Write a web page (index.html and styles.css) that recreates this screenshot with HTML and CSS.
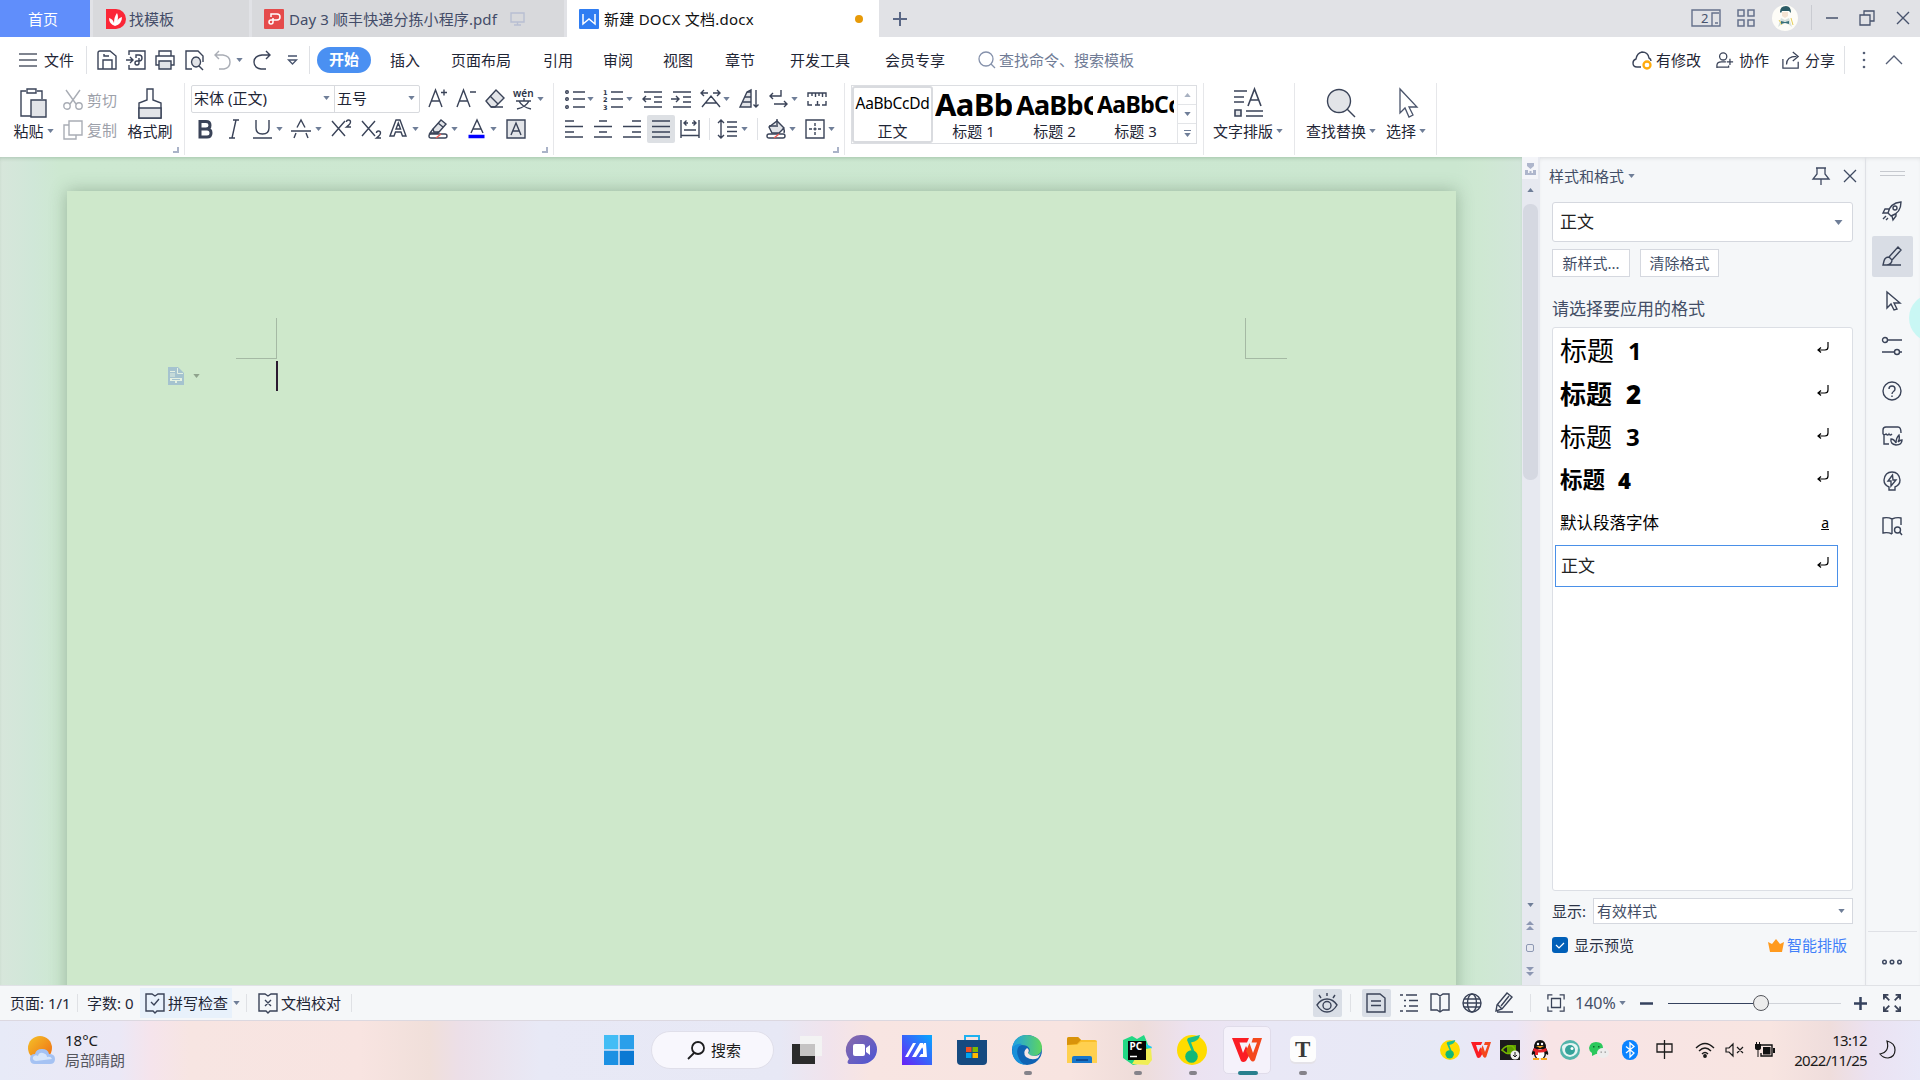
FILE: index.html
```html
<!DOCTYPE html>
<html lang="zh-CN">
<head>
<meta charset="utf-8">
<title>新建 DOCX 文档.docx</title>
<link rel="stylesheet" href="styles.css">
</head>
<body>
<svg class="defs" width="0" height="0">
  <symbol id="caret" viewBox="0 0 8 5"><path d="M0 0h8L4 5z" fill="#6f7e98"/></symbol>
  <symbol id="ret" viewBox="0 0 12 12"><path d="M11 0v5q0 3-3 3H1M4 5.500L1 8l3 2.500" fill="none" stroke="#000" stroke-width="1.200"/></symbol>
  <symbol id="note" viewBox="0 0 30 30"><circle cx="15" cy="15" r="15" fill="#ffdc00"/><path d="M11 3l12-3q-1 6-9 7.500L18.500 19l-3-1L10 5z" fill="#1bbf8d"/><circle cx="14.500" cy="21.500" r="6.300" fill="#12b877"/></symbol>
  <symbol id="wps" viewBox="0 0 30 24"><path d="M0 0h17l-2 4.500H7.500L11 15l3-7 4 8-4 7q-3 2-5 0z" fill="#fb1d24"/><path d="M21 0h9l-7 22q-2 3-4.500 0L14 13l3.500-8 3.500 10 4-10.500h-5.500z" fill="#f4481d"/></symbol>
</svg>

<header class="titlebar">
  <div class="tab home">首页</div>
  <div class="tab tpl">
    <svg class="tabico" viewBox="0 0 20 20"><path d="M0 0h10a10 10 0 0 1 0 20H0z" fill="#fb2637"/><path d="M9 17q-6-2-6-8 4 1 5 5 0-6 3-10 2 4 0 9 1-4 5-5 0 7-7 9z" fill="#fff"/></svg>
    <span>找模板</span>
  </div>
  <div class="tab pdf">
    <svg class="tabico" viewBox="0 0 20 20"><rect width="20" height="20" rx="1" fill="#e54b4b"/><path d="M7 8V5h6q3 0 3 3t-3 3H7q-2 0-2 2t2 2 2-2V9" fill="none" stroke="#fff" stroke-width="1.500"/></svg>
    <span class="name">Day 3 顺丰快递分拣小程序.pdf</span>
    <svg width="15" height="14" viewBox="0 0 15 14" fill="none" stroke="#b8bfd2" stroke-width="1.400"><path d="M1 1h13v9H1zM7.500 10v3M4 13h7"/></svg>
  </div>
  <div class="tab doc">
    <svg class="tabico" viewBox="0 0 20 20"><rect width="20" height="20" rx="1" fill="#2f7df2"/><path d="M4 5v10l6-5 6 5V5" fill="none" stroke="#fff" stroke-width="1.500"/></svg>
    <span>新建 DOCX 文档.docx</span>
    <i class="dirty"></i>
  </div>
  <svg class="addtab" viewBox="0 0 14 14"><path d="M7 0v14M0 7h14" stroke="#5a6785" stroke-width="2"/></svg>
  <div class="wintools">
    <svg width="30" height="18" viewBox="0 0 30 18" fill="none" stroke="#65718c" stroke-width="1.400"><path d="M1 1h28v16H1zM28 4h-7v13M24 14h3"/><text x="10" y="14" class="two">2</text></svg>
    <svg width="18" height="18" viewBox="0 0 18 18" fill="none" stroke="#65718c" stroke-width="1.500"><path d="M1 1h6v6H1zM11 1h6v6h-6zM1 11h6v6H1zM11 11h6v6h-6z"/></svg>
    <svg width="26" height="26" viewBox="0 0 26 26"><circle cx="13" cy="13" r="13" fill="#fdfcf7"/><path d="M8 7q0-6 6-6 5 0 5 7l-2-2H10l-1 2z" fill="#2b5b66"/><path d="M10 7h6v4l-3 2-3-2z" fill="#f4e3d2"/><path d="M6 22l3-9 4 2 4-2 3 9-4-3-3-3-3 3z" fill="#d6e0dc"/><path d="M7 15l3 5M19 13l2 7" stroke="#e6cf56"/><path d="M9 16l4 1 4-1v3l-4-1-4 1z" fill="#38717b"/></svg>
    <i class="vline"></i>
    <svg width="12" height="12" viewBox="0 0 12 12"><path d="M0 6h12" stroke="#47536d" stroke-width="1.500"/></svg>
    <svg width="16" height="16" viewBox="0 0 16 16" fill="none" stroke="#47536d" stroke-width="1.300"><path d="M1 5h10v10H1zM5 5V1h10v10h-4"/></svg>
    <svg width="14" height="14" viewBox="0 0 14 14"><path d="M1 1l12 12M13 1L1 13" stroke="#47536d" stroke-width="1.400"/></svg>
  </div>
</header>

<nav class="menubar">
  <svg width="18" height="14" viewBox="0 0 18 14"><path d="M0 1h18M0 7h18M0 13h18" stroke="#555c6b" stroke-width="1.300"/></svg>
  <span>文件</span>
  <i class="vline"></i>
  <svg class="ic" viewBox="0 0 20 20"><path d="M1 3q0-2 2-2h10l6 5v13H1zM6 19v-9h9v9M7 4v2h5"/></svg>
  <svg class="ic" viewBox="0 0 20 20"><path d="M3 5V1h16v18H3v-4M0 10h7M4 7l3 3-3 3M10 8V5h3q3 0 3 3t-3 3h-2q-2 0-2 2t2 2 2-2V8"/></svg>
  <svg class="ic" viewBox="0 0 20 20"><path d="M4 6V1h12v5M4 15H1V6h18v9h-3"/><path class="soft" d="M4 11h12v8H4z"/></svg>
  <svg class="ic" viewBox="0 0 20 20"><path d="M7 19H1V1h12l5 5v6"/><path class="soft" d="M11 7a4.500 5 0 1 0 .1 0z"/><path d="M14 16l4 4"/></svg>
  <svg class="ic dim" viewBox="0 0 20 20"><path d="M5 1L1 5l4 4M1 5h8q7 1 7 7t-6 7H5"/></svg>
  <svg class="caret"><use href="#caret"/></svg>
  <svg class="ic" viewBox="0 0 20 20"><path d="M13 1l4 4-4 4M17 5H9q-8 1-8 7t7 7h5"/></svg>
  <svg width="11" height="11" viewBox="0 0 11 11" fill="none" stroke="#47536d" stroke-width="1.300"><path d="M1 1h9M1.500 5h8L5.500 9z"/></svg>
  <i class="vline"></i>
  <b class="pill">开始</b>
  <span>插入</span><span>页面布局</span><span>引用</span><span>审阅</span><span>视图</span><span>章节</span><span>开发工具</span><span>会员专享</span>
  <svg width="18" height="18" viewBox="0 0 18 18" fill="none" stroke="#8591ab" stroke-width="1.300"><circle cx="8" cy="8" r="7"/><path d="M13 13l4 4"/></svg>
  <span class="hint">查找命令、搜索模板</span>
  <svg class="ic" viewBox="0 0 20 20"><path d="M9 17H5Q1 17 1 13q0-3 3-4 1-6 6-7 6 0 7 6 2 1 2 3"/><circle cx="15" cy="15" r="3.500" stroke="#ffab0c" stroke-width="2.300"/></svg>
  <span>有修改</span>
  <svg class="ic s18" viewBox="0 0 20 20"><circle cx="8" cy="6" r="4"/><path d="M1 19v-3q0-4 5-4h5M1 18h13v-2M12 12h7M15.500 8.500v7"/></svg>
  <span>协作</span>
  <svg class="ic s18" viewBox="0 0 20 20"><path d="M1 9v10h17v-7M5 15q0-9 11-9M12 1l6 5-6 5"/></svg>
  <span>分享</span>
  <i class="vline"></i>
  <svg width="8" height="18" viewBox="0 0 8 18" fill="#555f76"><circle cx="4" cy="2" r="1.300"/><circle cx="4" cy="9" r="1.300"/><circle cx="4" cy="16" r="1.300"/></svg>
  <svg width="18" height="10" viewBox="0 0 18 10" fill="none" stroke="#555f76" stroke-width="1.300"><path d="M1 9l8-8 8 8"/></svg>
</nav>

<section class="ribbon">
  <div class="group g-clip">
    <div class="big paste">
      <svg width="28" height="30" viewBox="0 0 28 30" fill="none" stroke="#3a4358" stroke-width="1.400"><path d="M6 3H1v25h10M17 3h5v8M7 1h9v4H7z"/><path class="soft" d="M11 12h15v17H11z"/></svg>
      <span>粘贴<svg class="caret"><use href="#caret"/></svg></span>
    </div>
    <div class="pairs">
      <div><svg class="ic dim" viewBox="0 0 20 20"><path d="M3 0l10 14M17 0L7 14"/><circle cx="4" cy="16" r="3.200"/><circle cx="16" cy="16" r="3.200"/></svg>剪切</div>
      <div><svg class="ic dim" viewBox="0 0 20 20"><path d="M6 1h13v14H6zM6 5H1v14h12v-4"/></svg>复制</div>
    </div>
    <div class="big brush">
      <svg width="24" height="31" viewBox="0 0 24 31" fill="none" stroke="#3a4358" stroke-width="1.400"><path d="M9 1h6v11l8 3v15H1V15l8-3z"/><path class="soft" d="M1 20h22v10H1z"/></svg>
      <span>格式刷</span>
    </div>
    <i class="corner"></i>
  </div>

  <div class="group g-font">
    <div class="row f1">
      <div class="combo"><span class="face">宋体 (正文)<svg class="caret"><use href="#caret"/></svg></span><span class="size">五号<svg class="caret"><use href="#caret"/></svg></span></div>
      <svg class="ic" viewBox="0 0 20 20"><path d="M1 18L7.500 1 14 18M3 12h9M13 3.500h6M16 .5v6"/></svg>
      <svg class="ic" viewBox="0 0 20 20"><path d="M1 18L7.500 1 14 18M3 12h9M14 3h6"/></svg>
      <svg class="ic" viewBox="0 0 20 20"><path class="soft" d="M1 12L11 1l8 8-9 9H6z"/><path d="M5 7l8 8M6 18h12"/></svg>
      <svg class="ic" viewBox="0 0 20 20"><text class="wen" x="-1" y="8">wén</text><path d="M2 12h15M10 9v3M5 12q3 6 12 8M15 12q-3 6-12 8"/></svg>
      <svg class="caret"><use href="#caret"/></svg>
    </div>
    <div class="row f2">
      <svg class="ic" viewBox="0 0 20 20"><path stroke-width="3" d="M5 2.500h6q4 0 4 3.700t-4 3.800H5zM5 10h7q4 0 4 4t-4 4H5z"/></svg>
      <svg class="ic" viewBox="0 0 20 20"><path d="M9 1h6M5 19h6M12 1L8 19"/></svg>
      <svg class="ic" viewBox="0 0 20 20"><path d="M3 1v8q0 6 6.500 6T16 9V1M0 19h19"/></svg>
      <svg class="caret"><use href="#caret"/></svg>
      <svg class="ic" viewBox="0 0 20 20"><path d="M3 19l2-5M17 19l-2-5M6 8.500L10 1l4 7.500M0 12h20"/></svg>
      <svg class="caret"><use href="#caret"/></svg>
      <svg class="ic" viewBox="0 0 20 20"><path d="M1 2l13 15M14 2L1 17M15.500 3q0-2 2-2t2 2q0 2-4 5h4.500"/></svg>
      <svg class="ic" viewBox="0 0 20 20"><path d="M1 2l13 15M14 2L1 17M15.500 14q0-2 2-2t2 2q0 2-4 5h4.500"/></svg>
      <svg class="ic" viewBox="0 0 20 20"><path d="M1 17L7 1h4l6 16h-3.500l-1.500-4H6.500L5 17zM7 10h4.500L9.300 4z"/></svg>
      <svg class="caret"><use href="#caret"/></svg>
      <svg class="ic" viewBox="0 0 20 20"><path class="soft" d="M5 10l8-9 5 4-7 8H6z"/><path d="M5 10l-3 4h7l2-1M10 4l5 4M3 15h14q2 0 2 2t-2 2H3q-2 0-2-2t2-2z"/><path d="M8 19l5-4" stroke="#ee5b52"/></svg>
      <svg class="caret"><use href="#caret"/></svg>
      <svg class="ic" viewBox="0 0 20 20"><path d="M4 14L10 1l6 13M6 10h8"/><path d="M1.500 17.500h16" stroke="#0000ff" stroke-width="3.500"/></svg>
      <svg class="caret"><use href="#caret"/></svg>
      <svg class="ic" viewBox="0 0 20 20"><path class="soft" d="M1 1h18v18H1z"/><path d="M5 16l5-12 5 12M7 12h6"/></svg>
    </div>
    <i class="corner"></i>
  </div>

  <div class="group g-para">
    <div class="row p1">
      <svg class="ic" viewBox="0 0 20 20"><path d="M8 3h12M8 10h12M8 18h12"/><circle cx="2" cy="3" r="1.300"/><circle cx="2" cy="10" r="1.300"/><circle cx="2" cy="18" r="1.300"/></svg>
      <svg class="caret"><use href="#caret"/></svg>
      <svg class="ic" viewBox="0 0 20 20"><path d="M8 3h12M8 10h12M8 18h12"/><text class="num" x="0" y="5.500">1</text><text class="num" x="0" y="13">2</text><text class="num" x="0" y="20.500">3</text></svg>
      <svg class="caret"><use href="#caret"/></svg>
      <svg class="ic" viewBox="0 0 20 20"><path d="M2 3h18M12 8h8M12 13h8M2 18h18M1 10h8M4 7l-3 3 3 3"/></svg>
      <svg class="ic" viewBox="0 0 20 20"><path d="M2 3h18M12 8h8M12 13h8M2 18h18M0 10h8M5 7l3 3-3 3"/></svg>
      <svg class="ic" viewBox="0 0 20 20"><path d="M2 18l9-11 9 11M6 14h10M1 4h7M4 1L1 4l3 3M13 4h7M17 1l3 3-3 3"/></svg>
      <svg class="caret"><use href="#caret"/></svg>
      <svg class="ic" viewBox="0 0 20 20"><path class="soft" d="M1 18L8 3l4-2v17z"/><path d="M8 3h4M6 8h6M4 13h8M17 1v17M14.500 15.500L17 18l2.500-2.500"/></svg>
      <svg class="ic" viewBox="0 0 20 20"><path d="M12 1v6H1M4 4L1 7l3 3M5 15h13M15 12l3 3-3 3"/></svg>
      <svg class="caret"><use href="#caret"/></svg>
      <svg class="ic" viewBox="0 0 20 20"><path d="M1 8V4h18v4M5 4v3M8.500 4v4M12 4v3M15.500 4v4M1 12v4h4M8 16h5M10.500 12v4M15 16h4v-4"/></svg>
    </div>
    <div class="row p2">
      <svg class="ic" viewBox="0 0 20 20"><path d="M1 2h9M1 7.500h18M1 13h9M1 18h18"/></svg>
      <svg class="ic" viewBox="0 0 20 20"><path d="M6 2h8M1 7.500h18M6 13h8M1 18h18"/></svg>
      <svg class="ic" viewBox="0 0 20 20"><path d="M10 2h9M1 7.500h18M10 13h9M1 18h18"/></svg>
      <span class="on"><svg class="ic" viewBox="0 0 20 20"><path d="M1 2h18M1 7.500h18M1 13h18M1 18h18"/></svg></span>
      <svg class="ic" viewBox="0 0 20 20"><path d="M1 1v18M19 1v18M4 4h4M12 4h4M6.500 1.500L4 4l2.500 2.500M13.500 1.500L16 4l-2.500 2.500M4 11h12M1 16.500h18"/></svg>
      <i class="vline"></i>
      <svg class="ic" viewBox="0 0 20 20"><path d="M4 1v18M1 4l3-3 3 3M1 16l3 3 3-3M10 3h10M10 8h10M10 12.500h10M10 17h10"/></svg>
      <svg class="caret"><use href="#caret"/></svg>
      <i class="vline"></i>
      <svg class="ic" viewBox="0 0 20 20"><path class="soft" d="M3 8l8-6 7 7-5 5H6z"/><path d="M11 6V0M3 7h9M17 9q2 2 1 5M3 15h14q2 0 2 2t-2 2H3q-2 0-2-2t2-2z"/><path d="M8 19l5-4" stroke="#ee5b52"/></svg>
      <svg class="caret"><use href="#caret"/></svg>
      <svg class="ic" viewBox="0 0 20 20"><path d="M1 1h18v18H1z"/><path d="M10 4v3M10 8.500v3M10 13v3M4 10h3M8.500 10h3M13 10h3"/></svg>
      <svg class="caret"><use href="#caret"/></svg>
    </div>
    <i class="corner"></i>
  </div>

  <div class="group g-style">
    <div class="gallery">
      <div class="cell sel"><p class="s0">AaBbCcDd</p><em>正文</em></div>
      <div class="cell"><p class="s1">AaBb</p><em>标题 1</em></div>
      <div class="cell"><p class="s2">AaBbC</p><em>标题 2</em></div>
      <div class="cell"><p class="s3">AaBbCc</p><em>标题 3</em></div>
      <div class="spin"><span><svg class="caret up faint"><use href="#caret"/></svg></span><span><svg class="caret"><use href="#caret"/></svg></span><span><i></i><svg class="caret"><use href="#caret"/></svg></span></div>
    </div>
  </div>

  <div class="group g-lay">
    <div class="big">
      <svg width="30" height="30" viewBox="0 0 30 30" fill="none" stroke="#3a4358" stroke-width="1.600"><path d="M1 3h13M1 9h10M1 14h10M15 18L21.500 1 28 18M17 12h9M13 23h17M13 28h17"/><path class="soft" d="M2 22h6v6H2z"/></svg>
      <span>文字排版<svg class="caret"><use href="#caret"/></svg></span>
    </div>
  </div>

  <div class="group g-find">
    <div class="big find">
      <svg width="30" height="30" viewBox="0 0 30 30" fill="none" stroke="#3a4358" stroke-width="1.400"><circle class="soft" cx="13" cy="13" r="11.500"/><path d="M21 21l8 8"/></svg>
      <span>查找替换<svg class="caret"><use href="#caret"/></svg></span>
    </div>
    <div class="big">
      <svg width="30" height="30" viewBox="0 0 30 30" fill="none" stroke="#4a546b" stroke-width="1.300"><path d="M9 1v24l5-5 4 9 4-2-4-8h8z"/></svg>
      <span>选择<svg class="caret"><use href="#caret"/></svg></span>
    </div>
  </div>
</section>

<main class="work">
  <div class="canvas">
    <div class="page"></div>
    <i class="mark ml"></i><i class="mark mr"></i>
    <i class="cursor"></i>
    <div class="pasteopt">
      <svg width="16" height="18" viewBox="0 0 16 18"><path d="M0 0h10l6 6v12H0z" fill="#a5c3cf"/><path d="M9.500 1v5.500H15M2 4.500h5M2 7h5M2 9h5" stroke="#e4f1e2" fill="none"/><path d="M2 11h12v3H9v2H7v-2H2z" fill="#e4f1e2"/><path d="M4 12.500h8" stroke="#a5c3cf"/></svg>
      <svg width="7" height="4" viewBox="0 0 8 5"><path d="M0 0h8L4 5z" fill="#8fa38d"/></svg>
    </div>
  </div>
  <div class="scroll">
    <div class="top"><svg width="11" height="13" viewBox="0 0 11 13" fill="#aeb6cc"><path d="M2 0h7v3L5.500 6 2 3zM0 7h3v3h1.500V8h2v2H8V7h3v5H0z"/></svg></div>
    <svg class="caret up a1"><use href="#caret"/></svg>
    <i class="thumb"></i>
    <svg class="caret a2"><use href="#caret"/></svg>
    <svg class="a3" width="8" height="9" viewBox="0 0 8 9" fill="#8d98b3"><path d="M0 4l4-4 4 4zM0 9l4-4 4 4z"/></svg>
    <i class="sq"></i>
    <svg width="8" height="9" viewBox="0 0 8 9" fill="#8d98b3"><path d="M0 0h8L4 4zM0 5h8L4 9z"/></svg>
  </div>
  <aside class="panel">
    <div class="phead"><span>样式和格式</span><svg class="caret"><use href="#caret"/></svg>
      <svg class="pin" width="18" height="18" viewBox="0 0 18 18" fill="none" stroke="#3f4a62" stroke-width="1.300"><path d="M4 1h10M5 1v6l-4 5h16l-4-5V1M9 12v6"/></svg>
      <svg width="14" height="14" viewBox="0 0 14 14"><path d="M1 1l12 12M13 1L1 13" stroke="#3f4a62" stroke-width="1.300"/></svg></div>
    <div class="cur"><span>正文</span><svg class="caret wide"><use href="#caret"/></svg></div>
    <div class="btns"><span>新样式...</span><span>清除格式</span></div>
    <div class="lbl">请选择要应用的格式</div>
    <div class="list">
      <div class="it h1"><span>标题</span><b>1</b><svg class="ret"><use href="#ret"/></svg></div>
      <div class="it h2"><span>标题</span><b>2</b><svg class="ret"><use href="#ret"/></svg></div>
      <div class="it h3"><span>标题</span><b>3</b><svg class="ret"><use href="#ret"/></svg></div>
      <div class="it h4"><span>标题</span><b>4</b><svg class="ret"><use href="#ret"/></svg></div>
      <div class="it h5"><span>默认段落字体</span><u>a</u></div>
      <div class="it h6"><span>正文</span><svg class="ret"><use href="#ret"/></svg></div>
    </div>
    <div class="show"><span>显示:</span><div>有效样式<svg class="caret"><use href="#caret"/></svg></div></div>
    <div class="prev">
      <svg width="16" height="16" viewBox="0 0 16 16"><rect width="16" height="16" rx="3" fill="#005fb8"/><path d="M4 8l3 3 5-5" fill="none" stroke="#fff" stroke-width="1.200"/></svg>
      <span>显示预览</span>
      <svg class="crown" width="16" height="13" viewBox="0 0 16 13"><path d="M0 3l4 2 4-5 4 5 4-2-2 10H2z" fill="#ff9a1e"/></svg>
      <a>智能排版</a>
    </div>
  </aside>
  <aside class="side">
    <i class="grip"></i>
    <span class="sb"><svg class="ic" viewBox="0 0 20 20"><path d="M6 12Q8 2 19 1q0 11-10 14zM7 8H3l-2 4 5 0M10 15l1 4 3-4v-3M1 18l3-3M4 19l2-2"/><circle cx="13" cy="7" r="2"/></svg></span>
    <span class="sb on"><svg class="ic" viewBox="0 0 20 20"><path d="M7 11L16 1l3 3-9 10zM7 11q-4 0-5 4l-1 4h4q5-1 5-5M1 19h18"/></svg></span>
    <span class="sb"><svg class="ic" viewBox="0 0 20 20"><path d="M5 1v16l4-4 3 6 3-1-3-6h6z"/></svg></span>
    <span class="sb"><svg class="ic" viewBox="0 0 20 20"><circle cx="3" cy="4" r="2.500"/><path d="M6 4h14M0 16h12M18 16h2"/><circle cx="15" cy="16" r="2.500"/></svg></span>
    <span class="sb"><svg class="ic" viewBox="0 0 20 20"><circle cx="10" cy="10" r="9"/><path d="M7 8q0-3 3-3t3 3q0 1.500-1.500 2.500T10 13M10 14.500v1.500"/></svg></span>
    <span class="sb"><svg class="ic" viewBox="0 0 20 20"><path d="M2 8v10h5M1 8V4q0-3 3-3h12q3 0 3 6M1 7q0 3 3 1 2 2 3 0 1 2 3 0"/><path d="M14 19q-6-1-5-6 3 0 5 4 0-5 3-8 1 4-1 7 2-2 4-2 0 5-6 5z"/></svg></span>
    <span class="sb"><svg class="ic" viewBox="0 0 20 20"><path d="M7 19v-3q-5-2-5-7 1-8 8-8t8 8q0 5-5 7v3zM10.500 4L6 10h3v5l5-6h-3z"/></svg></span>
    <span class="sb"><svg class="ic" viewBox="0 0 20 20"><path d="M10 18q-4-2-9-1V2q5-1 9 1 5-2 9-1v7M10 3v15"/><circle cx="15.500" cy="14" r="3"/><path d="M17.500 16l2.500 3"/></svg></span>
    <i class="sep"></i>
    <svg class="dots" width="20" height="6" viewBox="0 0 20 6" fill="none" stroke="#3f4a62" stroke-width="1.500"><circle cx="2.500" cy="3" r="1.800"/><circle cx="10" cy="3" r="1.800"/><circle cx="17.500" cy="3" r="1.800"/></svg>
    <div class="bubble"></div>
  </aside>
</main>

<footer class="status">
  <span>页面: 1/1</span><i class="vline"></i><span>字数: 0</span>
  <span class="spell"><svg class="ic" viewBox="0 0 20 20"><path d="M1 1h6l3 2 3-2h6v17h-7l-2 2-2-2H1zM6 9l3 3 5-6"/></svg>拼写检查</span>
  <svg class="caret"><use href="#caret"/></svg><i class="vline"></i>
  <span class="proof"><svg class="ic" viewBox="0 0 20 20"><path d="M1 1h6l3 2 3-2h6v17h-7l-2 2-2-2H1zM7 7l6 6M13 7l-6 6"/></svg>文档校对</span><i class="vline"></i>
  <span class="on"><svg class="ic" viewBox="0 0 20 20"><path d="M0 12q4-6 10-6t10 6q-4 7-10 7T0 12zM10 0v3M2 2l2 3M18 2l-2 3"/><circle cx="10" cy="12.500" r="4"/></svg></span>
  <i class="vline"></i>
  <span class="on"><svg class="ic" viewBox="0 0 20 20"><path d="M1 1h13l5 4v14H1zM5 8h10M5 12.500h10"/></svg></span>
  <svg class="ic" viewBox="0 0 20 20"><path d="M0 2h3M6 2h11M4 7.500h2M9 7.500h9M4 13h2M9 13h9M0 18h3M6 18h12"/></svg>
  <svg class="ic" viewBox="0 0 20 20"><path d="M1 1h6l3 2 3-2h6v16h-6l-3 2-3-2H1zM10 3v15"/></svg>
  <svg class="ic" viewBox="0 0 20 20"><circle cx="10" cy="10" r="9"/><ellipse cx="10" cy="10" rx="4.500" ry="9"/><path d="M2 6h16M1 10h18M2 14h16"/></svg>
  <svg class="ic" viewBox="0 0 20 20"><path d="M3 12L13 0l5 4-10 12-6 2zM4 12l4 4M7 13l8-10M3 19h16"/></svg>
  <i class="vline"></i>
  <svg class="ic s18" viewBox="0 0 20 20"><path d="M1 6V1h5M14 1h5v5M19 14v5h-5M6 19H1v-5M5 5h10v10H5z"/></svg>
  <span class="zoom">140%</span>
  <svg class="caret"><use href="#caret"/></svg>
  <svg width="13" height="13" viewBox="0 0 13 13"><path d="M0 6.500h13" stroke="#35425e" stroke-width="2.500"/></svg>
  <div class="slider"><i class="a"></i><i class="knob"></i><i class="b"></i></div>
  <svg width="13" height="13" viewBox="0 0 13 13"><path d="M0 6.500h13M6.500 0v13" stroke="#35425e" stroke-width="2.500"/></svg>
  <svg class="ic s18 heavy" viewBox="0 0 20 20"><path d="M7 7L1 1M1 6V1h5M13 7l6-6M14 1h5v5M7 13l-6 6M1 14v5h5M13 13l6 6M19 14v5h-5"/></svg>
</footer>

<div class="taskbar">
  <svg class="wx" width="30" height="30" viewBox="0 0 30 30"><defs><linearGradient id="sun" x2="1" y2="1"><stop offset="0" stop-color="#f5c228"/><stop offset="1" stop-color="#ee6a13"/></linearGradient></defs><circle cx="14" cy="13" r="12" fill="url(#sun)"/><path d="M9 29q-5 0-5-5t5-5q1-5 7-5t7 5q6 0 6 5t-5 5z" fill="#a5c2f3"/><path d="M10 26q-4-1-3-4 2-3 5-1 1-4 5-3 4 1 4 4 4-1 5 2z" fill="#d7e6fb"/></svg>
  <div class="weather"><span>18°C</span><span>局部晴朗</span></div>
  <div class="apps">
    <svg class="app" viewBox="0 0 30 30"><path d="M0 0h14.300v14.300H0z" fill="#43bdf5"/><path d="M15.700 0H30v14.300H15.700z" fill="#2a9fea"/><path d="M0 15.700h14.300V30H0z" fill="#1c91e3"/><path d="M15.700 15.700H30V30H15.700z" fill="#0a79d3"/></svg>
    <div class="search"><svg width="18" height="18" viewBox="0 0 18 18" fill="none" stroke="#1d1d1f" stroke-width="1.800"><circle cx="11" cy="7" r="6"/><path d="M7 12l-6 6"/></svg>搜索</div>
    <svg class="app" viewBox="0 0 30 30"><path d="M0 9h23v20H0z" fill="#2b2b2b"/><path d="M8 1h22v20H8z" fill="#f3f3f3"/><path d="M8 9h15v12H8z" fill="#c5c3c3"/></svg>
    <svg class="app" viewBox="0 0 30 30"><defs><linearGradient id="chat" x2="1" y2="1"><stop offset="0" stop-color="#8a6aa8"/><stop offset="1" stop-color="#4b55d6"/></linearGradient></defs><path d="M15 0a15 14.500 0 0 1 0 29H2q-3-1 0-5A15 15 0 0 1 15 0z" fill="url(#chat)"/><rect x="6" y="9" width="12" height="12" rx="2" fill="#fff"/><path d="M19 13l4-3v10l-4-3z" fill="#fff"/></svg>
    <svg class="app" viewBox="0 0 30 30"><defs><linearGradient id="arm" x1="1" y1="0" x2="0" y2="1"><stop offset="0" stop-color="#06a8ff"/><stop offset="1" stop-color="#6a20f5"/></linearGradient></defs><path d="M0 0h30v30H0z" fill="url(#arm)"/><path d="M3 22L11 8h3L6 22zM10 22l8-14h3v3l-7 11zM17 22l2-3h2v-5l-1-2 2-4h2l1 14z" fill="#fff"/></svg>
    <svg class="app" viewBox="0 0 30 30"><path d="M8 6V1h14v5" fill="none" stroke="#1fb1f0" stroke-width="2"/><path d="M0 5h30v21q0 4-4 4H4q-4 0-4-4z" fill="#164a80"/><path d="M9 12h5.500v5H9z" fill="#f25022"/><path d="M15.500 12H21v5h-5.500z" fill="#7fba00"/><path d="M9 18h5.500v5H9z" fill="#00a4ef"/><path d="M15.500 18H21v5h-5.500z" fill="#ffb900"/></svg>
    <svg class="app" viewBox="0 0 30 30"><defs><linearGradient id="edg"><stop offset="0" stop-color="#1f9fe8"/><stop offset="1" stop-color="#5fd65c"/></linearGradient></defs><circle cx="15" cy="15" r="15" fill="#0f63b4"/><path d="M0 14Q2 0 15 0q14 1 15 12 0 8-8 9-5 0-6-3 3-2 1-5-2-3-7-3-7 1-10 4z" fill="url(#edg)"/><path d="M16 18q2 3 6 3 5 0 7-3l-3 5q-6 3-12-1-4-5 1-9 3 2 1 5z" fill="#f6e5e5"/><path d="M1 12q4-4 9-3-7 4-4 12 2 7 8 9Q2 29 0 17z" fill="#198fd9"/></svg>
    <svg class="app" viewBox="0 0 30 30"><path d="M0 4q0-2 2-2h9l3 3h14q2 0 2 2v21H0z" fill="#f9bf2c"/><path d="M0 10V4q0-2 2-2h9l3 3-4 4z" fill="#d9930a"/><path d="M0 10h10l4-3h16v21H0z" fill="#ffd04f"/><path d="M5 28v-5q0-2 2-2h16q2 0 2 2v5z" fill="#1877cb"/><path d="M9 24h12v2H9z" fill="#0e4c94"/></svg>
    <svg class="app" viewBox="0 0 30 30"><path d="M1 5l9-4 5 3 7-4 3 7 3 9-3 11-14 3L1 23z" fill="#22d884"/><path d="M22 8l8 4-2 4z" fill="#1cc8f0"/><path d="M24 14l5-1 1 12-4 5-16-1 3-5z" fill="#f0ee55"/><path d="M6 6h18v19H6z" fill="#050505"/><text class="pc" x="7.500" y="15">PC</text><path d="M8 21.500h7" stroke="#fff" stroke-width="1.500"/></svg>
    <svg class="app"><use href="#note"/></svg>
    <span class="active"><svg width="30" height="24"><use href="#wps"/></svg></span>
    <svg class="app t" viewBox="0 0 30 30"><rect x="2" y="2" width="26" height="27" rx="5" fill="#e4e2e8"/><rect x="2" y="1" width="26" height="26" rx="5" fill="#fdfdfd"/><text class="tee" x="7" y="21.500">T</text></svg>
    <i class="dot d1"></i><i class="dot d2"></i><i class="dot d3"></i><i class="dot d4"></i><i class="dot d5"></i>
  </div>
  <div class="tray">
    <svg width="20" height="20"><use href="#note"/></svg>
    <svg width="20" height="16"><use href="#wps"/></svg>
    <svg width="20" height="20" viewBox="0 0 20 20"><path d="M0 0h20v20H0z" fill="#1c1c1c"/><path d="M7 5h9v9H7z" fill="#5f9e00"/><path d="M2 10q4-5 10-4 2 1 3 4-4 5-9 3z" fill="none" stroke="#76b900" stroke-width="1.500"/><circle cx="15" cy="15" r="4.500" fill="#eee"/><path d="M15 12v4M13 15l2 2 2-2" stroke="#222" fill="none"/></svg>
    <svg width="18" height="20" viewBox="0 0 18 20"><path d="M9 0q6 0 6 8 3 5 2 7l-2-1q0 5-6 5t-6-5l-2 1q-1-2 2-7 0-8 6-8z" fill="#111"/><ellipse cx="9" cy="14" rx="4.500" ry="5" fill="#fff"/><path d="M3 8q6 3 12 0l1 3q-7 3-14 0zM4 11h3v4H4z" fill="#e8242b"/><path d="M5 6h8l-4 2zM2 18h6v2H2zM10 18h6v2h-6z" fill="#f8a81b"/><circle cx="7" cy="4" r="1.200" fill="#fff"/><circle cx="11" cy="4" r="1.200" fill="#fff"/></svg>
    <svg width="20" height="20" viewBox="0 0 20 20"><circle cx="10" cy="10" r="10" fill="#52b5ab"/><path d="M2 7q0-3 8-4 7 0 8 5 0 8-8 9-8-1-8-10z" fill="#e6f5f3"/><circle cx="10" cy="10" r="5" fill="#35a39a"/><circle cx="12" cy="8.500" r="1.500" fill="#fff"/></svg>
    <svg width="20" height="18" viewBox="0 0 20 18"><path d="M7 1q7 0 7 6t-7 6l-4 2v-3Q0 10 0 7q1-6 7-6z" fill="#2bc85c"/><ellipse cx="14" cy="12" rx="6" ry="5" fill="#ededed"/><path d="M4 5h1.500v1.500H4zM9 5h1.500v1.500H9z" fill="#0a6b2b"/><path d="M11.500 10.500h1.500v1.200h-1.500zM15.500 10.500H17v1.200h-1.500z" fill="#999"/></svg>
    <svg width="16" height="20" viewBox="0 0 16 20"><rect width="16" height="20" rx="7.500" fill="#0b83ff"/><path d="M4 6.500l8 6.500-4 4V3l4 3.500L4 13" fill="none" stroke="#fff" stroke-width="1.300"/></svg>
    <svg width="17" height="19" viewBox="0 0 17 19" fill="none" stroke="#1b1b1b" stroke-width="1.300"><path d="M1 4h15v8H1zM8.500 0v19"/></svg>
    <svg width="20" height="16" viewBox="0 0 20 16" fill="none" stroke="#1b1b1b" stroke-width="1.400"><path d="M1 6q9-9 18 0M4 9q6-6 12 0M7 12q3-3 6 0"/><circle cx="10" cy="14" r="1.200" fill="#1b1b1b"/></svg>
    <svg width="19" height="14" viewBox="0 0 19 14" fill="none" stroke="#1b1b1b" stroke-width="1.200"><path d="M1 5h3l4-4v12l-4-4H1zM12 4l6 6M18 4l-6 6"/></svg>
    <svg width="20" height="16" viewBox="0 0 20 16"><path d="M5 3h12v11H6v-3" fill="none" stroke="#111" stroke-width="1.400"/><path d="M8 5h7.500v7.500H8zM18 6h2v5h-2zM0 2h6v4q0 2-3 2T0 6zM1 0h1v3H1zM4 0h1v3H4zM2.500 8h1v7h-1z" fill="#111"/></svg>
    <div class="clock"><span>13:12</span><span>2022/11/25</span></div>
    <svg width="17" height="19" viewBox="0 0 17 19" fill="none" stroke="#1b1b1b" stroke-width="1.200"><path d="M8 1q8 2 8 9 0 7-7 8-5 0-8-4 10-2 7-13z"/></svg>
  </div>
</div>
</body>
</html>
```

FILE: styles.css
```css
* { box-sizing: border-box; }
body {
  margin: 0;
  width: 1920px;
  height: 1080px;
  overflow: hidden;
  display: flex;
  flex-direction: column;
  font: 15px/20px "Noto Sans", "Noto Sans CJK SC", sans-serif;
  color: #1f2636;
  background: #fff;
  white-space: nowrap;
}
svg { display: block; flex: none; overflow: visible; }
.defs { position: absolute; }
.caret { width: 7px; height: 4px; }
.caret.up { transform: rotate(180deg); }
.caret.wide { width: 9px; height: 5px; }
.caret.faint { opacity: .6; }
.vline { width: 1px; height: 100%; background: #dfe1e5; }
.ic { width: 20px; height: 20px; fill: none; stroke: #3a4358; stroke-width: 1.4; }
.ic.s18 { width: 18px; height: 18px; }
.ic.heavy { stroke-width: 2; }
.ic.dim { stroke: #a9adb5; }
.soft { fill: #e2e4e8; }
.ic text { fill: #2c3448; stroke: none; }
.wen { font-size: 10px; font-weight: 600; }
.num { font: 700 6.500px "DejaVu Sans", sans-serif; }

/* title bar */
.titlebar { height: 37px; flex: none; display: flex; gap: 3px; background: #e1e2e6; }
.tab { display: flex; align-items: center; background: #d8d9dc; color: #434c68; padding-top: 1px; }
.tabico { width: 20px; height: 20px; margin-right: 5px; }
.home { width: 90px; justify-content: center; background: #608efb; color: #fff; padding-right: 4px; }
.tpl { width: 156px; padding-left: 13px; }
.tpl .tabico { margin-right: 3px; }
.pdf { width: 312px; padding-left: 12px; }
.pdf .name { width: 221px; letter-spacing: .1px; }
.doc { width: 312px; padding-left: 12px; background: #fff; color: #111; letter-spacing: .25px; }
.dirty { width: 8px; height: 8px; border-radius: 50%; background: #e79a08; margin: 0 16px 0 auto; }
.addtab { width: 14px; height: 14px; align-self: center; margin-left: 11px; }
.wintools { margin-left: auto; display: grid; grid-template-columns: 46px 35px 39px 15px 33px 37px 24px; align-items: center; padding-bottom: 2px; }
.wintools .vline { height: 25px; background: #c9cbd1; }
.two { font-size: 13px; fill: #47536d; stroke: none; }

/* menu */
.menubar {
  height: 46px; flex: none; padding-left: 19px;
  display: grid; align-items: center;
  grid-template-columns: 25px 42px 11px 29px 29px 30px 29px 22px 17px 34px 22px 8px 73px 61px 92px 60px 60px 62px 65px 95px 93px 21px 633px 24px 60px 23px 43px 23px 39px 16px 25px 20px;
}
.menubar .vline { height: 28px; }
.pill { width: 54px; height: 26px; line-height: 25px; text-align: center; border-radius: 13px; background: #4a90f2; color: #fff; }
.hint { color: #6f7b95; }

/* ribbon */
.ribbon { height: 74px; flex: none; display: flex; }
.group { position: relative; height: 72px; border-right: 1px solid #e6e7ea; }
.corner { position: absolute; right: 5px; bottom: 2px; width: 6px; height: 6px; border: solid #aab3c8; border-width: 0 2px 2px 0; }
.big { display: flex; flex-direction: column; align-items: center; padding-top: 5px; }
.big > svg { margin-bottom: 3px; }
.big span { display: flex; align-items: center; gap: 3px; }
.g-clip { width: 185px; display: flex; }
.paste { width: 68px; padding: 5px 1px 0 0; }
.pairs { width: 57px; margin-left: -5px; }
.pairs div { display: flex; align-items: center; gap: 4px; height: 31px; color: #9da1aa; }
.pairs div:first-child { padding-top: 3px; }
.brush { width: 60px; }
.brush > svg { margin-bottom: 2px; }
.g-font { width: 369px; padding: 2px 0 0 6px; }
.row { display: grid; align-items: center; height: 28px; }
.row + .row { margin-top: 2px; }
.f1 { grid-template-columns: 237px 28px 29px 29px 23px 8px; }
.f2 { padding-left: 4px; grid-template-columns: 29px 29px 23px 15px 24px 16px 30px 28px 23px 16px 23px 16px 23px 16px 20px; }
.combo { width: 229px; height: 28px; display: flex; border: 1px solid #d8dade; border-radius: 2px; }
.combo span { display: flex; align-items: center; justify-content: space-between; padding: 0 4px 2px 2px; }
.face { width: 143px; border-right: 1px solid #d8dade; }
.size { flex: 1; }
.g-para { width: 291px; padding: 2px 0 0 10px; }
.p1 { padding-left: 1px; grid-template-columns: 22px 16px 23px 16px 29px 29px 23px 16px 30px 22px 16px 20px; }
.p2 { grid-template-columns: 29px 29px 25px 33px 29px 8px 24px 16px 9px 23px 16px 23px 8px; }
.row .vline { height: 22px; }
.row .on { width: 28px; height: 28px; padding: 4px; background: #dde0e4; border-radius: 2px; }
.g-style { width: 359px; padding: 2px 0 0 6px; }
.gallery { width: 346px; height: 59px; border: 1px solid #dcdee2; display: flex; }
.cell { width: 81px; padding: 0 1px; text-align: center; border: 2px solid transparent; border-width: 2px 1px; overflow: hidden; }
.cell.sel { border-width: 2px; border-color: #d9dbdf; border-radius: 3px; padding: 0; }
.cell p { margin: 0; height: 33px; line-height: 33px; overflow: hidden; color: #000; text-align: left; font-weight: 700; }
.cell em { display: block; font-style: normal; line-height: 20px; }
.cell .s0 { font-size: 15.500px; font-weight: 400; letter-spacing: -.3px; text-align: center; line-height: 31px; }
.cell .s1 { font-size: 31px; letter-spacing: -.6px; }
.cell .s2 { font-size: 27px; letter-spacing: -.8px; }
.cell .s3 { font-size: 23px; letter-spacing: -.6px; }
.spin { width: 19px; border-left: 1px solid #e3e5e8; margin-left: auto; }
.spin span { height: 19px; display: flex; flex-direction: column; align-items: center; justify-content: center; gap: 2px; border-bottom: 1px solid #e3e5e8; }
.spin span:last-child { border: 0; }
.spin i { width: 7px; height: 1px; background: #6f7e98; }
.g-lay { width: 91px; padding-right: 2px; }
.g-find { width: 142px; display: flex; padding-left: 11px; }
.find { width: 70px; margin-right: 10px; }

/* work area */
.work { height: 828px; flex: none; display: flex; }
.canvas { position: relative; width: 1522px; overflow: hidden; box-shadow: inset 0 3px 4px -2px rgba(0,60,20,.2); background: linear-gradient(90deg, #d7e6db 0, #d0e7d8 32px, #cde8d1 60px, #cbe7d0 1456px, #cee8d2 1480px, #d2e6da 1522px); }
.page { margin: 34px 0 0 67px; width: 1389px; height: 830px; background: #cee8cb; box-shadow: 0 0 16px rgba(60,90,60,.36); }
.mark { position: absolute; top: 161px; width: 41px; height: 41px; border: solid #a5b9a4; }
.ml { left: 236px; border-width: 0 1px 1px 0; }
.mr { left: 1245px; width: 42px; border-width: 0 0 1px 1px; }
.cursor { position: absolute; left: 276px; top: 204px; width: 2px; height: 30px; background: #2a1a30; }
.pasteopt { position: absolute; left: 168px; top: 210px; display: flex; align-items: center; gap: 9px; }
.scroll { width: 18px; background: #e7e9f0; display: flex; flex-direction: column; align-items: center; padding-right: 2px; }
.scroll .top { width: 16px; height: 22px; padding: 6px 0 0 3px; background: #f4f5f9; }
.a1 { margin-top: 9px; }
.thumb { width: 15px; height: 276px; border-radius: 7px; background: #d5d8e1; margin-top: 12px; }
.a2 { margin-top: 423px; }
.a3 { margin-top: 14px; }
.sq { width: 8px; height: 8px; border: 1.500px solid #8d98b3; border-radius: 2px; margin: 14px 0 15px; }
.panel { width: 326px; background: #f5f7f9; border-right: 1px solid #dfe1e6; padding: 0 12px; color: #434e66; box-shadow: inset 0 3px 4px -2px rgba(0,0,0,.12); }
.phead { display: flex; align-items: center; height: 38px; margin: 0 -4px 0 -3px; gap: 4px; }
.phead .pin { margin: 0 9px 0 auto; }
.cur { margin-top: 7px; height: 40px; width: 301px; border: 1px solid #d5d8df; border-radius: 3px; background: #fff; display: flex; align-items: center; justify-content: space-between; padding: 0 9px 0 7px; font-size: 17px; color: #222; }
.btns { display: flex; gap: 10px; margin-top: 7px; }
.btns span { width: 79px; height: 28px; line-height: 26px; text-align: center; background: #fff; border: 1px solid #d5d8df; }
.btns span:first-child { width: 78px; }
.lbl { margin-top: 20px; height: 25px; line-height: 24px; font-size: 17px; }
.list { margin-top: 5px; width: 301px; height: 564px; background: #fff; border: 1px solid #dcdfe5; border-radius: 3px; padding: 1px 14px 0 2px; color: #000; }
.it { height: 43px; display: flex; align-items: center; padding: 0 9px 0 5px; }
.it b { font-size: 24px; }
.it u, .ret { margin-left: auto; }
.ret { width: 12px; height: 12px; position: relative; top: -3px; }
.h1 { font-size: 27px; } .h1 b { margin-left: 14px; }
.h2 { font-size: 26px; font-weight: 700; } .h2 b { margin-left: 14px; font-size: 26px; }
.h3 { font-size: 26px; } .h3 b { margin-left: 14px; }
.h4 { font-size: 22.500px; font-weight: 700; height: 44px; } .h4 b { margin-left: 13px; font-size: 22px; }
.h5 { font-size: 16.500px; height: 42px; }
.h5 u { font-size: 14px; line-height: 14px; }
.h6 { height: 42px; margin-top: 1px; font-size: 17px; border: 1px solid #4a90e8; padding-left: 5px; padding-right: 8px; color: #222; }
.show { margin-top: 7px; display: flex; align-items: center; color: #2b3346; }
.show span { width: 41px; }
.show div { width: 260px; height: 26px; border: 1px solid #d5d8df; background: #fff; display: flex; align-items: center; justify-content: space-between; padding: 0 7px 0 3px; color: #434e66; }
.prev { display: flex; align-items: center; margin-top: 11px; color: #2b3346; }
.prev span { margin-left: 6px; }
.crown { margin: 0 3px 0 auto; }
.prev a { color: #417ff9; margin-right: 6px; }
.side { position: relative; width: 54px; overflow: hidden; background: #f5f7f9; display: flex; flex-direction: column; align-items: center; padding-right: 2px; box-shadow: inset 0 3px 4px -2px rgba(0,0,0,.12); }
.grip { width: 25px; height: 5px; margin: 14px 0 15px; border: solid #c6c9cf; border-width: 1px 0; }
.sb { width: 41px; height: 41px; padding: 10px 0 0 10px; margin-bottom: 4px; border-radius: 2px; }
.sb.on { background: #d9dde5; }
.sep { width: 49px; height: 1px; background: #dfe1e6; margin-top: 380px; }
.dots { margin-top: 27px; }
.bubble { position: absolute; left: 43px; top: 137px; width: 48px; height: 48px; border-radius: 50%; background: #c9f7f4; }

/* status bar */
.status {
  height: 35px; flex: none; background: #f5f7f9; border-top: 1px solid #e0e2e6; padding-left: 10px;
  display: grid; align-items: center;
  grid-template-columns: 67px 10px 53px 93px 13px 12px 93px 962px 37px 12px 38px 30px 32px 32px 36px 17px 28px 44px 21px 28px 186px 29px 20px;
}
.status .vline { height: 18px; }
.spell { width: 92px; height: 30px; background: #e8f1fb; padding-left: 5px; display: flex; align-items: center; gap: 3px; }
.proof { display: flex; align-items: center; gap: 3px; }
.status .on { width: 29px; height: 28px; padding: 4px; background: #d9dee6; border-radius: 2px; }
.zoom { font-size: 16px; color: #434e66; }
.slider { width: 173px; display: flex; align-items: center; }
.slider .a { width: 85px; height: 1px; background: #35425e; }
.slider .b { flex: 1; height: 1px; background: #d0d3d9; }
.knob { width: 16px; height: 16px; border: 1.500px solid #54565c; border-radius: 50%; background: #ececec; }

/* taskbar */
.taskbar {
  height: 60px; flex: none; display: flex; align-items: center; padding: 0 0 1px 26px; color: #1b1b1b;
  background: linear-gradient(90deg, #e7eaf7 0, #ebe8f6 120px, #f5e4ec 150px, #f7e5e2 190px, #f8e4e1 360px, #f0dfda 430px, #ecdfe8 460px, #e8e9f6 540px, #e7e8f5 780px, #f1e3ec 830px, #f8e5e2 870px, #f8e4e0 1070px, #eedcd9 1140px, #ece2f1 1190px, #e9e8f6 1270px, #e7e9f6 1450px, #ebe6f6 1515px, #f8e4e6 1550px, #f8e5e1 1770px, #efdddc 1830px, #ebe2f2 1870px, #e9e8f8 1920px);
  box-shadow: inset 0 1px #dcd8e0;
}
.weather { width: 539px; padding-left: 9px; display: flex; flex-direction: column; }
.weather span:last-child { color: #55565e; }
.apps { position: relative; display: flex; align-items: center; width: 845px; padding-left: 9px; }
.app { width: 30px; height: 30px; margin-right: 25px; }
.search { width: 123px; height: 38px; margin: 0 18px 0 -8px; border-radius: 19px; background: #f8f7fd; border: 1px solid #e0dfea; display: flex; align-items: center; gap: 6px; padding-left: 35px; }
.active { width: 48px; height: 48px; margin: 0 17px 0 -9px; background: #f5f2fb; border: 1px solid #e0dcea; border-radius: 5px; display: flex; align-items: center; justify-content: center; }
.app.t { margin: 0; }
.tee { font: 700 23px "Liberation Serif", serif; fill: #3a3a3a; }
.pc { font-size: 10px; font-weight: 700; fill: #fff; }
.dot { position: absolute; top: 45px; width: 8px; height: 4px; border-radius: 2px; background: #85838a; }
.d1 { left: 429px; } .d2 { left: 539px; } .d3 { left: 594px; } .d5 { left: 704px; }
.d4 { left: 643px; width: 20px; background: #28808e; }
.tray { display: grid; align-items: center; grid-template-columns: 31px 29px 31px 29px 29px 33px 34px 39px 30px 30px 25px 99px 20px; }
.clock { display: flex; flex-direction: column; align-items: flex-end; width: 87px; font-size: 15px; letter-spacing: -.7px; }
```
